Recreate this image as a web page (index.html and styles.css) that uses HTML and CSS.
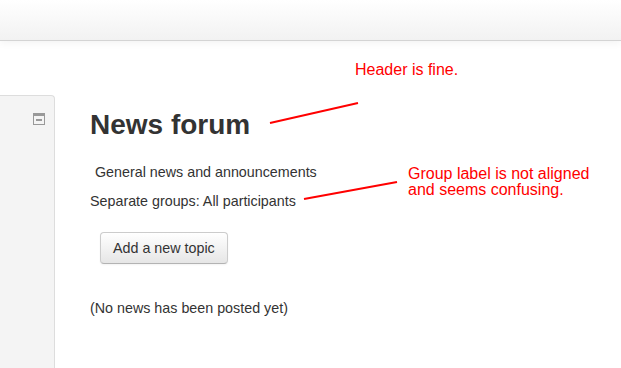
FILE: index.html
```html
<!DOCTYPE html>
<html>
<head>
    <title>News forum</title>
    <link rel="stylesheet" href="styles.css">
</head>
<body>
    <div class="navbar"></div>

    <div class="page">
        <div class="sidebar">
            <div class="block-header">
                <svg class="block-toggle" width="12" height="12" viewBox="0 0 12 12">
                    <rect x="0.5" y="0.5" width="11" height="11" fill="none" stroke="#999"/>
                    <rect x="0" y="0" width="12" height="3" fill="#999"/>
                    <rect x="3" y="6" width="6" height="2" fill="#999"/>
                </svg>
            </div>
        </div>

        <div class="main">
            <h2>News forum</h2>
            <div class="intro">General news and announcements</div>
            <div class="groups">Separate groups: All participants</div>
            <div class="new-topic">
                <button>Add a new topic</button>
            </div>
            <p class="empty">(No news has been posted yet)</p>
        </div>
    </div>

    <!-- review notes drawn over the page -->
    <svg class="notes-lines" width="621" height="368">
        <line x1="270" y1="123" x2="358" y2="103" stroke="#ff0000" stroke-width="2"/>
        <line x1="304" y1="199" x2="397" y2="182" stroke="#ff0000" stroke-width="2"/>
    </svg>
    <div class="note note-header">Header is fine.</div>
    <div class="note note-group">Group label is not aligned<br>and seems confusing.</div>
</body>
</html>
```

FILE: styles.css
```css
body {
    font-family: "Liberation Sans", Arial, sans-serif;
    font-size: 14.3px;
    line-height: 20px;
    color: #333;
    background-color: white;
    margin: 0;
    padding: 0;
    height: 368px;
    overflow: hidden;
}

.navbar {
    height: 40px;
    background: linear-gradient(to bottom, #ffffff, #f2f2f2);
    border-bottom: 1px solid #d4d4d4;
    box-shadow: 0 2px 8px rgba(0,0,0,0.05);
}

.page {
    display: flex;
    padding-top: 54px;
}

.sidebar {
    width: 54px;
    height: 273px;
    background-color: #f4f4f4;
    border: 1px solid #dddddd;
    border-left: none;
    border-bottom: none;
    border-radius: 0 4px 0 0;
    flex-shrink: 0;
}

.block-header {
    display: flex;
    justify-content: flex-end;
    padding: 17px 9px 0 0;
}

.block-toggle {
    display: block;
}

.main {
    margin-left: 35px;
}

h2 {
    font-size: 28px;
    font-weight: bold;
    line-height: 40px;
    color: #333;
    margin: 10px 0 17px 0;
}

.intro {
    padding-left: 5px;
    margin-bottom: 9px;
}

.groups {
    margin-bottom: 21px;
}

.new-topic {
    padding-left: 10px;
}

button {
    font-family: "Liberation Sans", Arial, sans-serif;
    font-size: 14.3px;
    line-height: 20px;
    color: #333;
    padding: 5px 12px;
    background: linear-gradient(to bottom, #ffffff, #e6e6e6);
    border: 1px solid #cccccc;
    border-bottom-color: #b3b3b3;
    border-radius: 4px;
    box-shadow: inset 0 1px 0 rgba(255,255,255,0.2), 0 1px 2px rgba(0,0,0,0.05);
    cursor: pointer;
}

.empty {
    margin: 34px 0 0 0;
}

.notes-lines {
    position: absolute;
    left: 0;
    top: 0;
    pointer-events: none;
}

.note {
    position: absolute;
    color: #ff0000;
    font-size: 16px;
    line-height: 16px;
}

.note-header {
    left: 355px;
    top: 62px;
}

.note-group {
    left: 408px;
    top: 166px;
}
```
